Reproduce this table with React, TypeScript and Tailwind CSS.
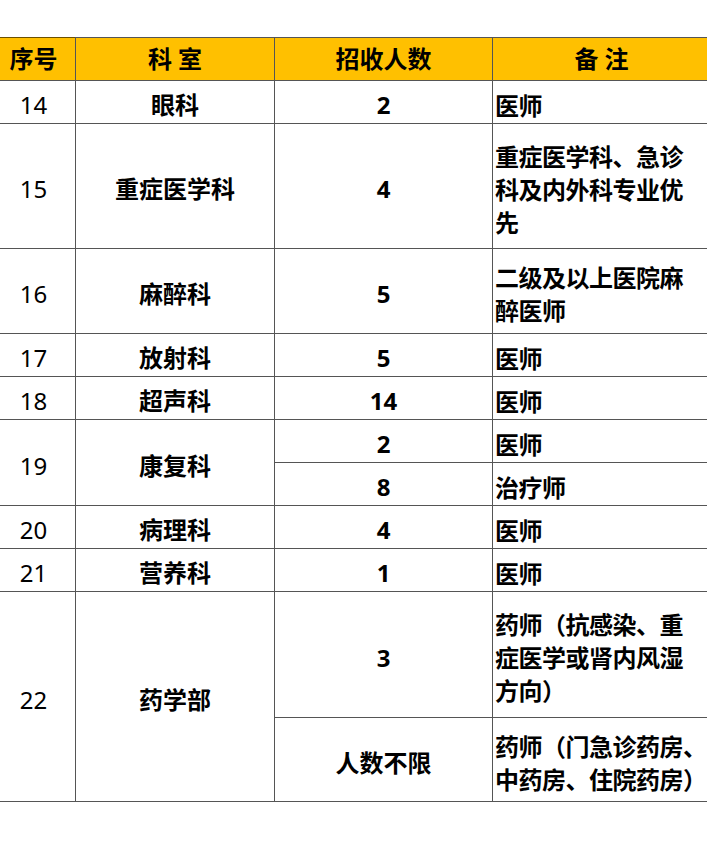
import React from 'react';

const font = { fontFamily: '"Noto Sans", "Noto Sans CJK SC", sans-serif' };

type Sub = { count: string; note: string[]; h: string };
type Row = { no: string; dept: string; subs: Sub[] };

const rows: Row[] = [
  { no: '14', dept: '眼科', subs: [{ count: '2', note: ['医师'], h: 'h-[42px]' }] },
  {
    no: '15',
    dept: '重症医学科',
    subs: [{ count: '4', note: ['重症医学科、急诊', '科及内外科专业优', '先'], h: 'h-[125px]' }],
  },
  { no: '16', dept: '麻醉科', subs: [{ count: '5', note: ['二级及以上医院麻', '醉医师'], h: 'h-[85px]' }] },
  { no: '17', dept: '放射科', subs: [{ count: '5', note: ['医师'], h: 'h-[43px]' }] },
  { no: '18', dept: '超声科', subs: [{ count: '14', note: ['医师'], h: 'h-[43px]' }] },
  {
    no: '19',
    dept: '康复科',
    subs: [
      { count: '2', note: ['医师'], h: 'h-[43px]' },
      { count: '8', note: ['治疗师'], h: 'h-[43px]' },
    ],
  },
  { no: '20', dept: '病理科', subs: [{ count: '4', note: ['医师'], h: 'h-[43px]' }] },
  { no: '21', dept: '营养科', subs: [{ count: '1', note: ['医师'], h: 'h-[43px]' }] },
  {
    no: '22',
    dept: '药学部',
    subs: [
      { count: '3', note: ['药师（抗感染、重', '症医学或肾内风湿', '方向）'], h: 'h-[126px]' },
      { count: '人数不限', note: ['药师（门急诊药房、', '中药房、住院药房）'], h: 'h-[84px]' },
    ],
  },
];

const cell = 'border border-[#555] p-0 align-middle';

const App = () => {
  return (
    <div className="w-[707px] h-[858px] bg-white overflow-hidden pt-[37px]" style={font}>
      <table className="table-fixed border-collapse ml-[-9px] w-[719px] text-[24px] text-black">
        <colgroup>
          <col className="w-[84px]" />
          <col className="w-[199px]" />
          <col className="w-[218px]" />
          <col className="w-[218px]" />
        </colgroup>
        <thead>
          <tr className="bg-[#ffc000] font-bold">
            <th className={`${cell} h-[43px] border-t-[#6b4f00] text-center`}>序号</th>
            <th className={`${cell} text-center`}>科 室</th>
            <th className={`${cell} text-center`}>招收人数</th>
            <th className={`${cell} text-center`}>备 注</th>
          </tr>
        </thead>
        <tbody>
          {rows.map(row =>
            row.subs.map((sub, i) => (
              <tr key={row.no + '-' + i}>
                {i === 0 && (
                  <>
                    <td rowSpan={row.subs.length} className={`${cell} text-center pt-[6px]`}>
                      {row.no}
                    </td>
                    <td rowSpan={row.subs.length} className={`${cell} text-center font-bold pt-[6px]`}>
                      {row.dept}
                    </td>
                  </>
                )}
                <td className={`${cell} ${sub.h} text-center font-bold pt-[6px]`}>{sub.count}</td>
                <td className={`${cell} font-bold pl-[2px] pt-[6px] leading-[33px] whitespace-nowrap tracking-[-0.5px]`}>
                  {sub.note.map(line => (
                    <div key={line}>{line}</div>
                  ))}
                </td>
              </tr>
            ))
          )}
        </tbody>
      </table>
    </div>
  );
};

export default App;
